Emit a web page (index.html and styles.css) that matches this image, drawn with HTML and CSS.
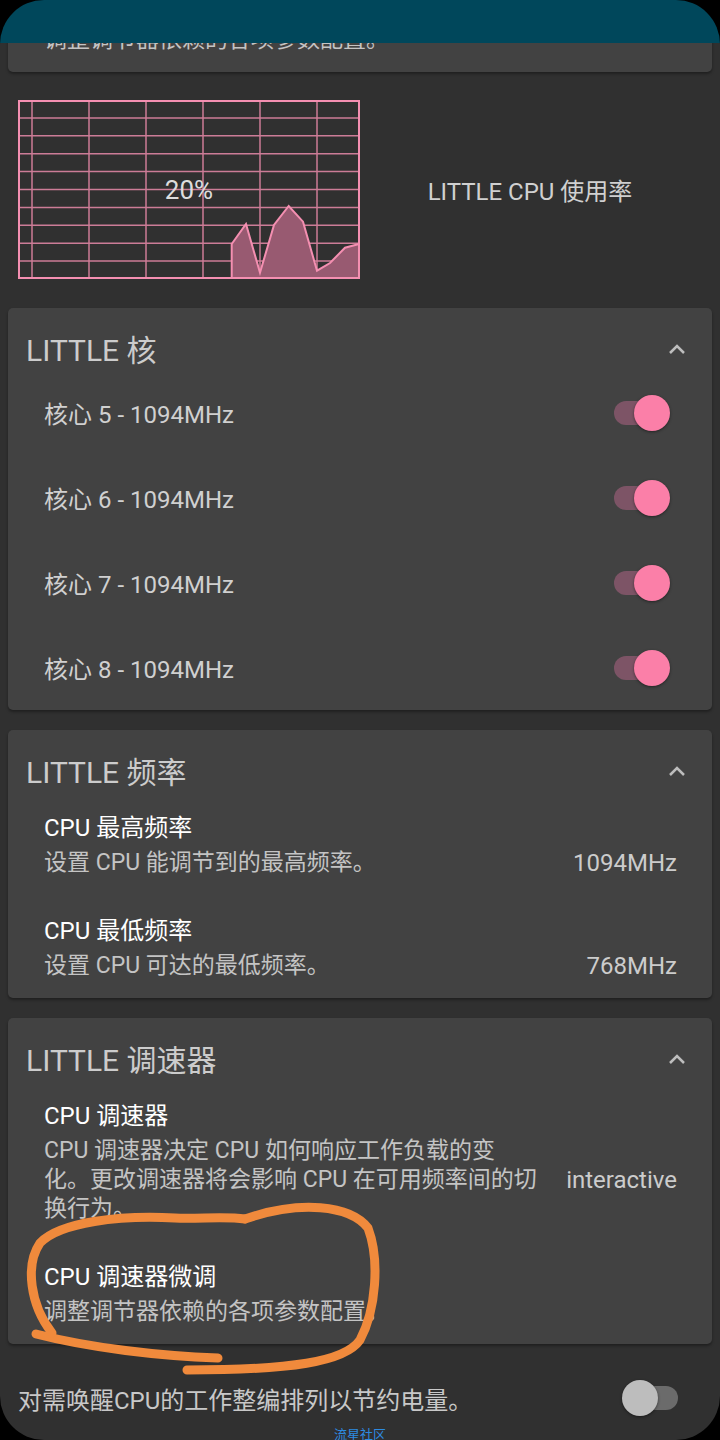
FILE: index.html
```html
<!DOCTYPE html>
<html lang="zh-CN">
<head>
    <meta charset="UTF-8">
    <meta name="viewport" content="width=device-width, initial-scale=1.0">
    <title>LITTLE CPU</title>
    <link rel="stylesheet" href="styles.css">
</head>
<body>
    <div class="appbar"></div>

    <div class="page">
        <!-- bottom of the previous card, scrolled under the app bar -->
        <div class="card card-cut">
            <div class="pref">
                <div class="pref-body">
                    <div class="pref-summary">调整调节器依赖的各项参数配置。</div>
                </div>
            </div>
        </div>

        <div class="usage">
            <div class="graph">
                <svg width="342" height="179" viewBox="0 0 342 179">
                    <g stroke="#f48fb1" stroke-width="1.5" opacity="0.8">
                        <line x1="0" y1="17.9" x2="342" y2="17.9"/>
                        <line x1="0" y1="35.8" x2="342" y2="35.8"/>
                        <line x1="0" y1="53.7" x2="342" y2="53.7"/>
                        <line x1="0" y1="71.6" x2="342" y2="71.6"/>
                        <line x1="0" y1="89.5" x2="342" y2="89.5"/>
                        <line x1="0" y1="107.4" x2="342" y2="107.4"/>
                        <line x1="0" y1="125.3" x2="342" y2="125.3"/>
                        <line x1="0" y1="143.2" x2="342" y2="143.2"/>
                        <line x1="0" y1="161.1" x2="342" y2="161.1"/>
                        <line x1="14" y1="0" x2="14" y2="179"/>
                        <line x1="71" y1="0" x2="71" y2="179"/>
                        <line x1="128" y1="0" x2="128" y2="179"/>
                        <line x1="185" y1="0" x2="185" y2="179"/>
                        <line x1="242" y1="0" x2="242" y2="179"/>
                        <line x1="299" y1="0" x2="299" y2="179"/>
                    </g>
                    <polygon fill="#985a71" points="213.7,179 213.7,144 228,124 242,172.7 256,125 270.7,106 285,121.7 299,170.7 312,163 327,147.7 341,144 341,179"/>
                    <polyline fill="none" stroke="#f48fb1" stroke-width="2" points="213.7,179 213.7,144 228,124 242,172.7 256,125 270.7,106 285,121.7 299,170.7 312,163 327,147.7 341,144"/>
                    <rect x="1" y="1" width="340" height="177" fill="none" stroke="#f48fb1" stroke-width="2"/>
                </svg>
                <span class="graph-value">20%</span>
            </div>
            <div class="usage-label">LITTLE CPU 使用率</div>
        </div>

        <div class="card">
            <div class="card-head">
                <span class="card-title">LITTLE 核</span>
                <svg class="chevron" width="18" height="10" viewBox="0 0 18 10"><polyline points="2,9 9,2 16,9"/></svg>
            </div>
            <div class="switch-row"><span>核心 5 - 1094MHz</span><span class="switch on"></span></div>
            <div class="switch-row"><span>核心 6 - 1094MHz</span><span class="switch on"></span></div>
            <div class="switch-row"><span>核心 7 - 1094MHz</span><span class="switch on"></span></div>
            <div class="switch-row"><span>核心 8 - 1094MHz</span><span class="switch on"></span></div>
        </div>

        <div class="card">
            <div class="card-head">
                <span class="card-title">LITTLE 频率</span>
                <svg class="chevron" width="18" height="10" viewBox="0 0 18 10"><polyline points="2,9 9,2 16,9"/></svg>
            </div>
            <div class="pref">
                <div class="pref-title">CPU 最高频率</div>
                <div class="pref-body">
                    <div class="pref-summary">设置 CPU 能调节到的最高频率。</div>
                    <div class="pref-value">1094MHz</div>
                </div>
            </div>
            <div class="pref">
                <div class="pref-title">CPU 最低频率</div>
                <div class="pref-body">
                    <div class="pref-summary">设置 CPU 可达的最低频率。</div>
                    <div class="pref-value">768MHz</div>
                </div>
            </div>
        </div>

        <div class="card">
            <div class="card-head">
                <span class="card-title">LITTLE 调速器</span>
                <svg class="chevron" width="18" height="10" viewBox="0 0 18 10"><polyline points="2,9 9,2 16,9"/></svg>
            </div>
            <div class="pref">
                <div class="pref-title">CPU 调速器</div>
                <div class="pref-body">
                    <div class="pref-summary">CPU 调速器决定 CPU 如何响应工作负载的变化。更改调速器将会影响 CPU 在可用频率间的切换行为。</div>
                    <div class="pref-value">interactive</div>
                </div>
            </div>
            <div class="pref">
                <div class="pref-title">CPU 调速器微调</div>
                <div class="pref-body">
                    <div class="pref-summary">调整调节器依赖的各项参数配置。</div>
                </div>
            </div>
        </div>

        <div class="bottom-row">
            <span>对需唤醒CPU的工作整编排列以节约电量。</span>
            <span class="switch"></span>
        </div>
    </div>

    <!-- hand drawn mark on top of the screenshot -->
    <svg class="scribble" width="720" height="1440" viewBox="0 0 720 1440">
        <g fill="none" stroke="#f08a3c" stroke-width="9" stroke-linecap="round" stroke-linejoin="round">
            <path d="M245 1219 C300 1200 350 1205 368 1228 C380 1260 376 1310 360 1340 C345 1362 290 1370 187 1370"/>
            <path d="M218 1358 C160 1356 90 1348 36 1334"/>
            <path d="M52 1333 C30 1305 25 1265 40 1243 C60 1222 120 1215 175 1218 C200 1219 225 1216 245 1219"/>
        </g>
    </svg>

    <div class="watermark">流星社区</div>
    <div class="frame"></div>
</body>
</html>
```

FILE: styles.css
```css
*{
    margin: 0;
    padding: 0;
    box-sizing: border-box;
}
html, body{
    height: 1440px;
    overflow: hidden;
}
body{
    width: 720px;
    position: relative;
    background-color: #303030;
    color: #cccccc;
    font-family: Roboto, "Noto Sans CJK SC", sans-serif;
}
.appbar{
    position: absolute;
    top: 0;
    left: 0;
    right: 0;
    height: 43px;
    background-color: #00475b;
    z-index: 2;
}
.frame{
    position: absolute;
    inset: 0;
    border-radius: 44px;
    box-shadow: 0 0 0 80px #000;
    pointer-events: none;
    z-index: 5;
}
.card{
    margin: 20px 8px 0;
    background-color: #424242;
    border-radius: 5px;
    box-shadow: 0 2px 3px rgba(0, 0, 0, 0.35);
}
.card-cut{
    margin-top: 3px;
}
.card-head{
    display: flex;
    align-items: center;
    justify-content: space-between;
    height: 62px;
    padding: 18px 26px 0 18px;
}
.card-title{
    font-size: 30px;
    color: #cccccc;
}
.chevron{
    margin-top: 2px;
}
.chevron polyline{
    fill: none;
    stroke: #bdbdbd;
    stroke-width: 2.5;
}

/* rows with a switch */
.switch-row{
    display: flex;
    align-items: center;
    justify-content: space-between;
    height: 85px;
    padding: 0 42px 0 36px;
    font-size: 24px;
    color: #d0d0d0;
}
.switch{
    position: relative;
    flex: none;
    width: 62px;
    height: 36px;
}
.switch::before{
    content: "";
    position: absolute;
    left: 6px;
    right: 6px;
    top: 6px;
    height: 24px;
    border-radius: 12px;
    background-color: #6b6b6b;
}
.switch::after{
    content: "";
    position: absolute;
    top: 0;
    left: 0;
    width: 36px;
    height: 36px;
    border-radius: 50%;
    background-color: #bdbdbd;
    box-shadow: 0 1px 3px rgba(0, 0, 0, 0.45);
}
.switch.on::before{
    background-color: #7d5466;
}
.switch.on::after{
    left: auto;
    right: 0;
    background-color: #fb7fa8;
}

/* preference items */
.pref{
    padding: 19px 35px 18px 36px;
}
.pref-title{
    font-size: 24px;
    line-height: 34px;
    color: #ffffff;
}
.pref-body{
    display: flex;
    align-items: center;
    margin-top: 3px;
}
.pref-summary{
    flex: 1;
    font-size: 23px;
    line-height: 29px;
    color: #c4c4c4;
}
.pref-value{
    width: 138px;
    text-align: right;
    font-size: 24px;
    color: #cccccc;
}

/* usage graph */
.usage{
    display: flex;
    align-items: center;
    padding: 28px 0 9px 18px;
}
.graph{
    display: grid;
    width: 342px;
    height: 179px;
}
.graph > *{
    grid-area: 1 / 1;
}
.graph-value{
    align-self: center;
    justify-self: center;
    font-size: 26px;
    color: #dddddd;
}
.usage-label{
    flex: 1;
    padding-right: 20px;
    text-align: center;
    font-size: 24px;
    color: #d0d0d0;
}

.bottom-row{
    display: flex;
    align-items: center;
    justify-content: space-between;
    height: 68px;
    margin-top: 20px;
    padding: 0 36px 0 18px;
    font-size: 24px;
    color: #c8c8c8;
}
.scribble{
    position: absolute;
    top: 0;
    left: 0;
    pointer-events: none;
    z-index: 3;
}
.watermark{
    position: absolute;
    left: 0;
    right: 0;
    bottom: -4px;
    text-align: center;
    font-size: 13px;
    line-height: 18px;
    color: #2d8be0;
    z-index: 6;
}
```
